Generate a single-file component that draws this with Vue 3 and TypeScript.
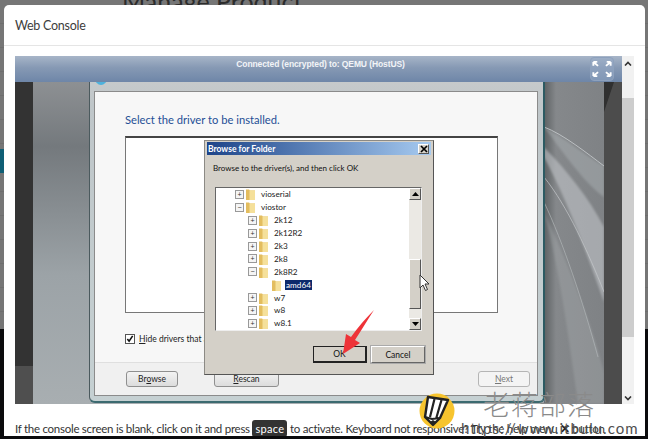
<script setup lang="ts">
interface TreeRow {
  name: string
  level: number
  expander: '+' | '-' | ''
  selected?: boolean
}

const rows: TreeRow[] = [
  { name: 'vioserial', level: 0, expander: '+' },
  { name: 'viostor', level: 0, expander: '-' },
  { name: '2k12', level: 1, expander: '+' },
  { name: '2k12R2', level: 1, expander: '+' },
  { name: '2k3', level: 1, expander: '+' },
  { name: '2k8', level: 1, expander: '+' },
  { name: '2k8R2', level: 1, expander: '-' },
  { name: 'amd64', level: 2, expander: '', selected: true },
  { name: 'w7', level: 1, expander: '+' },
  { name: 'w8', level: 1, expander: '+' },
  { name: 'w8.1', level: 1, expander: '+' }
]

const fullscreenArrows = [
  'M3 3l6 5M3 3v5M3 3h5',
  'M25 3l-6 5M25 3v5M25 3h-5',
  'M3 21l6-5M3 21v-5M3 21h5',
  'M25 21l-6-5M25 21v-5M25 21h-5'
]
</script>

<template>
  <div class="page">
    <div class="behind">
      <h1 class="behind-title">Manage Product</h1>
      <div class="behind-teal"></div>
      <div class="behind-black"></div>
    </div>

    <div class="modal">
      <header class="modal-header">Web Console</header>

      <div class="modal-body">
        <div class="console-row">
          <div class="console">
            <div class="vnc-bar">
              <span class="vnc-status">Connected (encrypted) to: QEMU (HostUS)</span>
              <button class="vnc-full" aria-label="Fullscreen">
                <svg width="22" height="20" viewBox="0 0 28 24" fill="none" stroke="#fff" stroke-width="2.4">
                  <path v-for="d in fullscreenArrows" :key="d" :d="d" />
                </svg>
              </button>
            </div>

            <div class="desktop">
              <svg class="desktop-art" width="571" height="322" viewBox="0 0 571 322" preserveAspectRatio="none">
                <defs>
                  <linearGradient id="wall" x1="0" y1="0" x2="0" y2="1">
                    <stop offset="0" stop-color="#8d9093" />
                    <stop offset="0.2" stop-color="#74797d" />
                    <stop offset="0.6" stop-color="#9ca3a7" />
                    <stop offset="1" stop-color="#a8aeb1" />
                  </linearGradient>
                  <linearGradient id="wallRight" x1="0" y1="0" x2="1" y2="0">
                    <stop offset="0" stop-color="#5d6163" />
                    <stop offset="0.2" stop-color="#85888b" />
                    <stop offset="1" stop-color="#7f8285" />
                  </linearGradient>
                  <filter id="soft" x="-10%" y="-10%" width="120%" height="120%">
                    <feGaussianBlur stdDeviation="1.2" />
                  </filter>
                </defs>
                <rect width="571" height="322" fill="url(#wall)" />
                <rect x="511" width="60" height="322" fill="url(#wallRight)" />
                <g filter="url(#soft)">
                  <path d="M511 45C530 55 555 75 571 84L571 115C550 100 530 70 511 45Z" fill="#aeb3b6" opacity="0.45" />
                  <path d="M511 65C535 90 555 115 571 145L571 220C550 160 530 110 511 75Z" fill="#c4c9cc" opacity="0.55" />
                  <path d="M511 130C530 170 555 230 571 290L571 322L545 322C535 250 525 180 511 130Z" fill="#aeb3b6" opacity="0.3" />
                </g>
                <path d="M511 45C530 52 555 72 571 84" stroke="#c9cdcf" fill="none" opacity="0.8" />
                <path d="M511 95C535 125 555 170 571 210" stroke="#c4c8ca" fill="none" opacity="0.7" />
                <path d="M511 120C530 160 550 220 565 275" stroke="#b8bcbe" fill="none" opacity="0.6" />
              </svg>

              <div class="side-strip side-strip--left">
                <div class="side-strip-end"></div>
              </div>
              <div class="side-strip side-strip--right">
                <svg class="side-notch" width="18" height="30" viewBox="0 0 18 30">
                  <path d="M0 0h10L0 30Z" fill="#303030" />
                </svg>
              </div>

              <!-- driver wizard window -->
              <div class="wizard">
                <div class="wizard-bubble"></div>
                <div class="wizard-panel">
                  <div class="wizard-main">
                    <h2 class="wizard-title">Select the driver to be installed.</h2>
                    <div class="driver-list"></div>
                    <label class="hide-row">
                      <span class="check">
                        <svg width="8" height="8" viewBox="0 0 9 9">
                          <path d="M1.5 4.5l2 2.5 4-6" fill="none" stroke="#111" stroke-width="1.8" />
                        </svg>
                      </span>
                      <span><u>H</u>ide drivers that a</span>
                    </label>
                  </div>
                  <div class="wizard-footer">
                    <button class="win-btn win-btn--browse">Br<u>o</u>wse</button>
                    <button class="win-btn win-btn--rescan"><u>R</u>escan</button>
                    <button class="win-btn win-btn--next"><u>N</u>ext</button>
                  </div>
                </div>
              </div>

              <!-- browse for folder dialog -->
              <div class="dialog">
                <div class="dialog-title">
                  <span>Browse for Folder</span>
                  <span class="dialog-close">
                    <svg width="8" height="8" viewBox="0 0 8 8">
                      <path d="M1 1l6 6M7 1l-6 6" stroke="#000" stroke-width="1.7" />
                    </svg>
                  </span>
                </div>
                <p class="dialog-text">Browse to the driver(s), and then click OK</p>
                <div class="tree">
                  <ul class="tree-list">
                    <li
                      v-for="row in rows"
                      :key="row.name"
                      class="tree-row"
                      :class="`tree-row--l${row.level}`"
                    >
                      <span class="expander" :class="{ 'expander--none': !row.expander }">{{ row.expander === '-' ? '−' : row.expander }}</span>
                      <svg class="folder" width="9" height="12" viewBox="0 0 9 12">
                        <path d="M0 1.5h3l1 1h5V12H0Z" fill="#e3bd5f" />
                        <path d="M3.5 2.5h5.5V12H3.5Z" fill="#f5e09a" />
                      </svg>
                      <span class="tree-name" :class="{ 'tree-name--selected': row.selected }">{{ row.name }}</span>
                    </li>
                  </ul>
                  <div class="tree-scroll">
                    <span class="tree-arrow">
                      <svg width="7" height="4" viewBox="0 0 7 4"><path d="M3.5 0L7 4H0Z" fill="#000" /></svg>
                    </span>
                    <div class="tree-track">
                      <div class="tree-thumb"></div>
                    </div>
                    <span class="tree-arrow">
                      <svg width="7" height="4" viewBox="0 0 7 4"><path d="M0 0h7L3.5 4Z" fill="#000" /></svg>
                    </span>
                  </div>
                </div>
                <div class="dialog-actions">
                  <button class="dlg-btn dlg-btn--default">OK</button>
                  <button class="dlg-btn">Cancel</button>
                </div>
              </div>

              <svg class="pointer" width="11" height="18" viewBox="0 0 11 18">
                <path d="M1 1v13l3-3 2.5 5.5 2-1L6 10h4Z" fill="#fff" stroke="#333" />
              </svg>
              <svg class="red-arrow" width="34" height="46" viewBox="0 0 34 46">
                <path d="M33 1C27 10 20 22 14 31L19 34L2 45L5 25L10 28C17 18 25 9 33 1Z" fill="#ee3338" />
              </svg>
            </div>
          </div>

          <div class="page-scroll">
            <svg width="8" height="5" viewBox="0 0 8 5"><path d="M1 4.5l3-3 3 3" fill="none" stroke="#333" stroke-width="1.6" /></svg>
            <div class="page-track">
              <div class="page-thumb"></div>
            </div>
            <svg width="8" height="5" viewBox="0 0 8 5"><path d="M1 .5l3 3 3-3" fill="none" stroke="#333" stroke-width="1.6" /></svg>
          </div>
        </div>

        <p class="console-hint">
          If the console screen is blank, click on it and press
          <kbd class="key">space</kbd>
          to activate. Keyboard not responsive? Try the help menu
          <b class="hint-icon">✕</b> button
        </p>
      </div>
    </div>

    <!-- watermark -->
    <div class="mark">
      <svg class="mark-logo" width="36" height="38" viewBox="0 0 36 38">
        <circle cx="18" cy="19" r="17.5" fill="#f7c42e" />
        <path d="M9 5L29 8L21 26L14 33L6 25Z" fill="#fff" stroke="#222" stroke-width="2.4" stroke-linejoin="round" />
        <path d="M15.5 7L11 25M22.5 8L17 27M6 25L13 27L21 26" fill="none" stroke="#222" stroke-width="2.2" />
        <path d="M11 30L14 33L17 30L14 28Z" fill="#222" />
      </svg>
      <div class="mark-cn">老蒋部落</div>
      <div class="mark-url">https://www.itbulu.com</div>
    </div>
  </div>
</template>

<style scoped>
.page {
  position: relative;
  width: 648px;
  height: 439px;
  overflow: hidden;
  background: #767676;
  font-family: Lato, sans-serif;
}

.behind {
  position: absolute;
  inset: 0;
  background-image: repeating-linear-gradient(to bottom, transparent 0, transparent 23px, #6e6e6e 23px, #6e6e6e 24px);
}

.behind-title {
  position: absolute;
  left: 122px;
  top: -14px;
  margin: 0;
  font-size: 25px;
  font-weight: 400;
  color: #2c2c2c;
  white-space: nowrap;
}

.behind-teal {
  position: absolute;
  left: 0;
  top: 149px;
  width: 4px;
  height: 24px;
  background: #0f5f75;
}

.behind-black {
  position: absolute;
  left: 0;
  right: 0;
  top: 329px;
  bottom: 0;
  background: #0b0b0d;
}

.modal {
  position: absolute;
  left: 4px;
  top: 5px;
  width: 641px;
  height: 431px;
  overflow: hidden;
  background: #fff;
  border-radius: 5px 5px 0 0;
}

.modal-header {
  height: 40px;
  padding-left: 11px;
  line-height: 42px;
  font-size: 12.5px;
  letter-spacing: -0.25px;
  color: #3d3d3d;
  border-bottom: 1px solid #e5e5e5;
}

.modal-body {
  padding: 10px 11px 0;
}

.console-row {
  display: flex;
}

.console {
  width: 607px;
  height: 348px;
}

.vnc-bar {
  position: relative;
  display: flex;
  align-items: center;
  justify-content: center;
  height: 26px;
  background: linear-gradient(to bottom, #a7b5c8 0%, #8699b4 45%, #6e86a8 100%);
}

.vnc-status {
  font: bold 8.5px "Liberation Sans", sans-serif;
  letter-spacing: -0.1px;
  color: #f2f4f7;
  margin-left: 4px;
  margin-bottom: 10px;
}

.vnc-full {
  position: absolute;
  left: 575px;
  top: 1px;
  width: 24px;
  height: 24px;
  display: flex;
  align-items: center;
  justify-content: center;
  padding: 0;
  background: rgba(150, 170, 200, 0.45);
  border: 1px solid #8da1bd;
  border-radius: 4px;
}

.desktop {
  position: relative;
  height: 322px;
  overflow: hidden;
  background: #8a8e91;
}

.desktop-art {
  position: absolute;
  left: 18px;
  top: 0;
}

.side-strip {
  position: absolute;
  top: 0;
  bottom: 0;
  width: 18px;
}

.side-strip--left {
  left: 0;
  background: #333;
}

.side-strip-end {
  position: absolute;
  left: 0;
  right: 0;
  bottom: 0;
  height: 38px;
  background: #4f4f4f;
}

.side-strip--right {
  right: 0;
  background: #4c4c4c;
}

.side-notch {
  display: block;
}

.wizard {
  position: absolute;
  left: 74px;
  top: -10px;
  width: 456px;
  height: 331px;
  box-sizing: border-box;
  padding: 19px 5px 5px 4px;
  background: linear-gradient(to bottom, #c9cbcc, #bfc6c9 10%, #c5d0d2);
  border-radius: 0 0 6px 6px;
  border-left: 1px solid #4b5a5e;
  border-right: 2px solid #2c5a62;
  border-bottom: 2px solid #3c6a70;
}

.wizard-bubble {
  position: absolute;
  left: 5px;
  top: 0;
  width: 12px;
  height: 13px;
  border-radius: 50%;
  background: #4db2dd;
}

.wizard-panel {
  display: flex;
  flex-direction: column;
  height: 100%;
  box-sizing: border-box;
  background: #f7f7f7;
  border: 1px solid #8b8b8b;
}

.wizard-main {
  flex: 1;
  padding: 19px 0 0 30px;
  background: #f7f7f7;
}

.wizard-title {
  margin: 0;
  font-size: 11.2px;
  font-weight: 400;
  line-height: 18px;
  color: #254f96;
}

.driver-list {
  width: 373px;
  height: 177px;
  margin-top: 7px;
  background: #fff;
  border: 1px solid #777;
  border-top: 2px solid #444;
  box-sizing: border-box;
}

.hide-row {
  display: flex;
  align-items: center;
  gap: 4px;
  margin-top: 21px;
  font-size: 8.5px;
  color: #222;
}

.check {
  display: flex;
  align-items: center;
  justify-content: center;
  width: 8px;
  height: 8px;
  background: #fff;
  border: 1px solid #555;
}

.wizard-footer {
  position: relative;
  height: 32px;
  background: #f0f0f0;
  border-top: 1px solid #dfdfdf;
}

.win-btn {
  position: absolute;
  top: 8px;
  height: 16px;
  padding: 0;
  font: 8.5px Lato, sans-serif;
  color: #222;
  background: linear-gradient(to bottom, #f3f3f3, #dcdcdc);
  border: 1px solid #8f8f8f;
  border-radius: 3px;
}

.win-btn--browse {
  left: 31px;
  width: 52px;
}

.win-btn--rescan {
  left: 119px;
  width: 65px;
}

.win-btn--next {
  left: 383px;
  width: 52px;
  color: #777;
  background: #f4f4f4;
  border-color: #b5b5b5;
}

.dialog {
  position: absolute;
  left: 189px;
  top: 58px;
  width: 230px;
  height: 235px;
  box-sizing: border-box;
  padding: 1px 2px;
  background: #d4d0c8;
  border: 1px solid #8c8a85;
  border-right-color: #555;
  border-bottom-color: #555;
}

.dialog-title {
  display: flex;
  align-items: center;
  justify-content: space-between;
  height: 13px;
  padding: 0 2px 0 1px;
  font-size: 8.5px;
  font-weight: 700;
  color: #fff;
  background: linear-gradient(to right, #1d4489, #a6caf0);
}

.dialog-close {
  display: flex;
  align-items: center;
  justify-content: center;
  width: 11px;
  height: 10px;
  background: #d4d0c8;
  border: 1px solid #fff;
  border-right-color: #555;
  border-bottom-color: #555;
  box-sizing: border-box;
}

.dialog-text {
  margin: 7px 0 0 6px;
  font-size: 8px;
  line-height: 13px;
  color: #111;
}

.tree {
  display: flex;
  width: 207px;
  height: 144px;
  margin: 12px 0 0 8px;
  box-sizing: border-box;
  background: #fff;
  border-top: 1px solid #666;
  border-left: 1px solid #666;
  border-right: 1px solid #eee;
  border-bottom: 1px solid #eee;
}

.tree-list {
  flex: 1;
  margin: 0;
  padding: 0;
  list-style: none;
}

.tree-row {
  display: flex;
  align-items: center;
  height: 12.9px;
  font-size: 8.2px;
  color: #222;
}

.tree-row--l0 {
  padding-left: 19px;
}

.tree-row--l1 {
  padding-left: 32px;
}

.tree-row--l2 {
  padding-left: 45px;
}

.expander {
  display: inline-flex;
  align-items: center;
  justify-content: center;
  width: 7px;
  height: 7px;
  margin-right: 2px;
  font: 7px/7px "Liberation Sans", sans-serif;
  color: #333;
  border: 1px solid #999;
  background: #f5f5f5;
}

.expander--none {
  visibility: hidden;
}

.folder {
  flex: none;
}

.tree-name {
  margin-left: 5px;
  padding: 0 1px;
}

.tree-name--selected {
  margin-left: 4px;
  background: #0c2a6c;
  color: #fff;
}

.tree-scroll {
  display: flex;
  flex-direction: column;
  width: 12px;
  background: #ebe9e4;
}

.tree-arrow {
  display: flex;
  align-items: center;
  justify-content: center;
  height: 12px;
  flex: none;
  background: #d4d0c8;
  border: 1px solid #fff;
  border-right-color: #555;
  border-bottom-color: #555;
  box-sizing: border-box;
}

.tree-track {
  flex: 1;
  padding-top: 59px;
}

.tree-thumb {
  height: 50px;
  box-sizing: border-box;
  background: #d4d0c8;
  border: 1px solid #fff;
  border-right-color: #555;
  border-bottom-color: #555;
}

.dialog-actions {
  display: flex;
  justify-content: flex-end;
  gap: 4px;
  margin: 15px 6px 0 0;
}

.dlg-btn {
  width: 54px;
  height: 17px;
  padding: 0;
  font: 8.5px Lato, sans-serif;
  color: #111;
  background: #d4d0c8;
  border: 1px solid #fff;
  border-right-color: #666;
  border-bottom-color: #666;
  outline: 1px solid #aaa;
  outline-offset: 0;
}

.dlg-btn--default {
  border: 1px solid #222;
  border-right-width: 2px;
  border-bottom-width: 2px;
  outline: none;
}

.pointer {
  position: absolute;
  left: 404px;
  top: 192px;
}

.red-arrow {
  position: absolute;
  left: 326px;
  top: 227px;
}

.page-scroll {
  display: flex;
  flex-direction: column;
  align-items: center;
  width: 12px;
  padding-top: 5px;
  height: 348px;
  box-sizing: border-box;
  background: #f1f1f1;
}

.page-track {
  flex: 1;
  width: 100%;
  padding-top: 32px;
}

.page-thumb {
  height: 239px;
  background: #cdcdcd;
}

.page-scroll svg:last-child {
  margin-bottom: 3px;
}

.console-hint {
  margin: 15px 0 0;
  font-size: 11.5px;
  letter-spacing: -0.27px;
  line-height: 19px;
  white-space: nowrap;
  color: #333;
}

.key {
  padding: 2px 3px;
  font: 11px Lato, sans-serif;
  letter-spacing: 0.3px;
  color: #fff;
  background: #333;
  border-radius: 3px;
}

.hint-icon {
  color: #222;
}

.mark {
  position: absolute;
  inset: 0;
  pointer-events: none;
}

.mark-logo {
  position: absolute;
  left: 419px;
  top: 392px;
}

.mark-cn {
  position: absolute;
  left: 483px;
  top: 388px;
  font: 200 27px "Noto Sans CJK SC", sans-serif;
  line-height: 32px;
  letter-spacing: 1px;
  color: #8a8a8a;
  white-space: nowrap;
}

.mark-url {
  position: absolute;
  left: 461px;
  top: 418px;
  font: 15px Lato, sans-serif;
  line-height: 20px;
  letter-spacing: 1px;
  color: #4f4f4f;
  white-space: nowrap;
}
</style>
